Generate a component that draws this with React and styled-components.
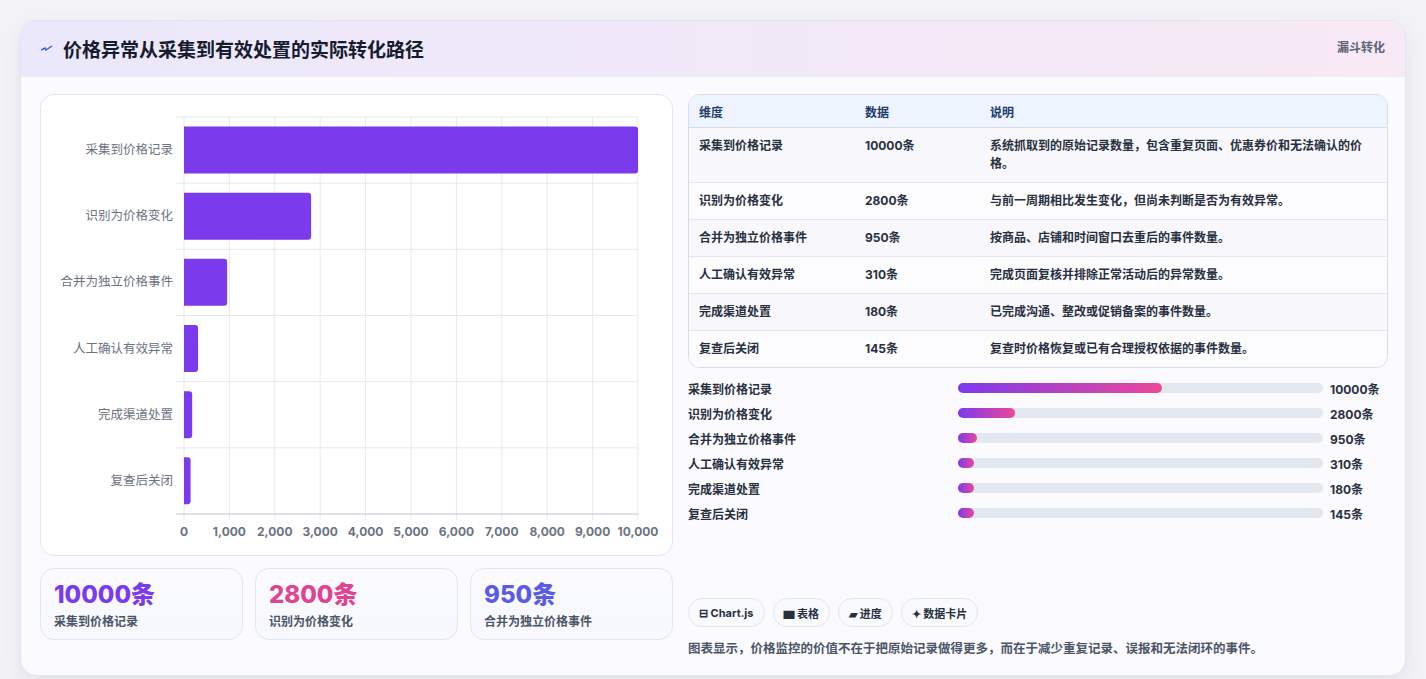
import React from "react";
import styled, { createGlobalStyle } from "styled-components";

const G = createGlobalStyle`
  body{margin:0;background:#f3f3f7;font-family:Inter,"Noto Sans CJK SC",sans-serif;}
`;
const Page = styled.div`padding:20px 20px 22px 20px;`;
const Card = styled.div`
  background:#fafaff;border:1px solid #e4e4f0;border-radius:16px;overflow:hidden;
  box-shadow:0 8px 20px rgba(30,30,80,.08);
`;
const Header = styled.div`
  height:55px;display:flex;align-items:center;justify-content:space-between;
  padding:0 20px 0 20px;background:linear-gradient(90deg,#ebe8fb,#f7e9f5);
  border-bottom:1px solid #ececf5;
`;
const Title = styled.h1`margin:0;font-size:19px;font-weight:700;color:#161b2e;display:flex;align-items:center;gap:10px;`;
const Tag = styled.span`font-size:12px;font-weight:700;color:#5d6577;align-self:flex-start;margin-top:17px;`;
const Body = styled.div`display:grid;grid-template-columns:633px 700px;gap:15px;padding:17px 19px 18px 19px;`;
const Col = styled.div`display:flex;flex-direction:column;`;
const ChartBox = styled.div`background:#fff;border:1px solid #e2e6f0;border-radius:14px;height:460px;position:relative;`;
const Stats = styled.div`display:grid;grid-template-columns:repeat(3,1fr);gap:12px;margin-top:12px;`;
const Stat = styled.div`border:1px solid #dfe7f3;border-radius:14px;height:72px;padding:12px 13px;box-sizing:border-box;background:linear-gradient(180deg,#fbfbff,#f6f8fd);`;
const Big = styled.div`font-size:24px;font-weight:800;color:${p=>p.c};line-height:28px;`;
const Small = styled.div`font-size:12px;font-weight:700;color:#4b5566;margin-top:3px;`;
const Table = styled.table`width:100%;border-collapse:separate;border-spacing:0;border:1px solid #d6dcea;border-radius:12px;overflow:hidden;font-size:12px;font-weight:700;color:#283040;`;
const Th = styled.th`text-align:left;height:32px;padding:0 10px;background:#eef4fe;color:#1e3a6e;border-bottom:1px solid #d6dcea;font-weight:700;`;
const Td = styled.td`padding:9px 10px;vertical-align:top;line-height:18px;background:${p=>p.alt?"#f7f7fc":"#fcfcff"};border-bottom:${p=>p.last?"none":"1px solid #e3e6ef"};`;
const Prog = styled.div`display:flex;flex-direction:column;gap:7px;margin-top:11px;`;
const PRow = styled.div`display:grid;grid-template-columns:263px 365px auto;align-items:center;gap:7px;font-size:12px;font-weight:700;color:#283040;height:18px;`;
const Track = styled.div`height:10px;background:#e3e7ef;border-radius:6px;`;
const Fill = styled.div`height:100%;border-radius:6px;background:linear-gradient(90deg,#7c3aed,#ec4899);`;
const Chips = styled.div`display:flex;gap:8px;margin-top:76px;`;
const Chip = styled.span`border:1px solid #e2e6ee;background:#f8fafd;border-radius:14px;padding:0 10px;height:27px;display:flex;align-items:center;font-size:11px;font-weight:700;color:#283040;`;
const Note = styled.p`margin:11px 0 0;font-size:12.5px;font-weight:700;color:#4b5566;`;

const data=[["采集到价格记录",10000,"系统抓取到的原始记录数量，包含重复页面、优惠券价和无法确认的价格。"],["识别为价格变化",2800,"与前一周期相比发生变化，但尚未判断是否为有效异常。"],["合并为独立价格事件",950,"按商品、店铺和时间窗口去重后的事件数量。"],["人工确认有效异常",310,"完成页面复核并排除正常活动后的异常数量。"],["完成渠道处置",180,"已完成沟通、整改或促销备案的事件数量。"],["复查后关闭",145,"复查时价格恢复或已有合理授权依据的事件数量。"]];

function Chart(){
  const x0=143,x1=597,y0=22,y1=419,bw=(y1-y0)/6;
  const sx=v=>x0+(x1-x0)*v/10000;
  return <svg width="632" height="460" style={{display:"block"}}>
    {Array.from({length:11},(_,i)=><line key={i} x1={sx(i*1000)} x2={sx(i*1000)} y1={y0} y2={y1+6} stroke="#e6e9f0"/>)}
    {Array.from({length:7},(_,i)=><line key={"h"+i} x1={x0-8} x2={x1} y1={y0+i*bw} y2={y0+i*bw} stroke="#e6e9f0"/>)}
    <line x1={x0-8} x2={x1} y1={y1} y2={y1} stroke="#c9ced8"/>
    {data.map((d,i)=>{const y=y0+i*bw+9.5,w=Math.max(sx(d[1])-x0,1);return <g key={i}>
      <path d={`M${x0} ${y}H${x0+w-3}a3 3 0 0 1 3 3V${y+44}a3 3 0 0 1-3 3H${x0}Z`} fill="#7c3aed"/>
      <text x={x0-11} y={y0+i*bw+bw/2+4} textAnchor="end" fontSize="12.5" fill="#6b7280" fontFamily='"Noto Sans CJK SC",sans-serif'>{d[0]}</text></g>})}
    {Array.from({length:11},(_,i)=><text key={"t"+i} x={sx(i*1000)} y={y1+22} textAnchor="middle" fontSize="12" fontWeight="700" fill="#6b7280" fontFamily="Inter,sans-serif">{(i*1000).toLocaleString("en-US")}</text>)}
  </svg>;
}

export default function App(){
  return <Page><G/><Card>
    <Header><Title><svg width="12" height="10" viewBox="0 0 12 10"><path d="M0 6l4-2 1 2 6-4" stroke="#3b5bdb" strokeWidth="1.5" fill="none"/></svg>价格异常从采集到有效处置的实际转化路径</Title><Tag>漏斗转化</Tag></Header>
    <Body>
      <Col>
        <ChartBox><Chart/></ChartBox>
        <Stats>
          <Stat><Big c="#7c3aed">10000条</Big><Small>采集到价格记录</Small></Stat>
          <Stat><Big c="#e0438f">2800条</Big><Small>识别为价格变化</Small></Stat>
          <Stat><Big c="#5b5ce6">950条</Big><Small>合并为独立价格事件</Small></Stat>
        </Stats>
      </Col>
      <Col>
        <Table><thead><tr><Th style={{width:146}}>维度</Th><Th style={{width:105}}>数据</Th><Th>说明</Th></tr></thead>
          <tbody>{data.map((d,i)=><tr key={i}><Td alt={i%2===0} last={i===5}>{d[0]}</Td><Td alt={i%2===0} last={i===5}>{d[1]}条</Td><Td alt={i%2===0} last={i===5}>{d[2]}</Td></tr>)}</tbody></Table>
        <Prog>{data.map((d,i)=><PRow key={i}><span>{d[0]}</span><Track><Fill style={{width:Math.max(d[1]/10000*56,4.4)+"%"}}/></Track><span>{d[1]}条</span></PRow>)}</Prog>
        <Chips><Chip>⊟ Chart.js</Chip><Chip>▆ 表格</Chip><Chip>▰ 进度</Chip><Chip>✦ 数据卡片</Chip></Chips>
        <Note>图表显示，价格监控的价值不在于把原始记录做得更多，而在于减少重复记录、误报和无法闭环的事件。</Note>
      </Col>
    </Body>
  </Card></Page>;
}
